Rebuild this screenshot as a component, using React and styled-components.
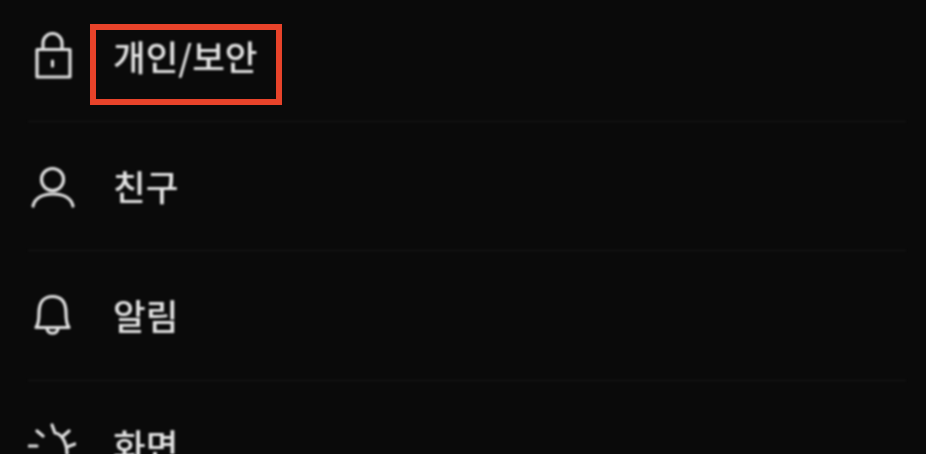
import React from "react";
import styled, { createGlobalStyle } from "styled-components";

const Global = createGlobalStyle`
  html, body { margin: 0; padding: 0; background: #0a0a0a; }
  body { width: 926px; height: 454px; overflow: hidden; }
`;

const Screen = styled.div`
  width: 926px;
  height: 454px;
  overflow: hidden;
  position: relative;
  background: #0a0a0a;
  font-family: "Noto Sans CJK KR", "Noto Sans", sans-serif;
`;

const List = styled.ul`
  list-style: none;
  margin: -8px 0 0;
  padding: 0 20px 0 28px;
  filter: blur(1px);
`;

const Row = styled.li`
  height: 129.5px;
  box-sizing: border-box;
  display: flex;
  align-items: center;
  border-bottom: 1px solid #1a1a1a;
`;

const IconSlot = styled.span`
  width: 48px;
  height: 48px;
  flex: none;
  display: block;
  color: #e2e2e2;
  svg { display: block; }
`;

const Label = styled.span`
  margin-left: 37px;
  font-size: 35.5px;
  font-weight: 500;
  line-height: 48px;
  color: #e4e4e4;
`;

const Highlight = styled.div`
  position: absolute;
  left: 90px;
  top: 24px;
  width: 192px;
  height: 81px;
  box-sizing: border-box;
  border: 6px solid #e8432a;
`;

const Icon = ({ children }) => (
  <IconSlot>
    <svg width="48" height="48" viewBox="0 0 48 48" fill="none" stroke="currentColor" strokeWidth="3.2" strokeLinecap="round" strokeLinejoin="round">
      {children}
    </svg>
  </IconSlot>
);

const items = [
  {
    label: "개인/보안",
    icon: (
      <>
        <rect x="9" y="17.500" width="33" height="27.500" />
        <path d="M15 17v-6a9.500 9.500 0 0 1 19 0v6" />
        <path d="M24.500 29v5" />
      </>
    ),
  },
  {
    label: "친구",
    icon: (
      <>
        <circle cx="24.500" cy="17.500" r="11" />
        <path d="M5 44C7 36 15 32 25 32S43 36 45 44" />
      </>
    ),
  },
  {
    label: "알림",
    icon: (
      <>
        <path d="M8 36.500C10 34 11 30 11 22C11 11 16 5.500 24.500 5.500S38 11 38 22C38 30 39 34 41 36.500Z" />
        <path d="M19 37C19 44 30 44 30 37" />
      </>
    ),
  },
  {
    label: "화면",
    icon: (
      <>
        <path d="M24 4L27 12C34 13 39 22 39 33" />
        <path d="M9 10L15 15M1 25H9M41 10L34 16M39 26L47 23" />
      </>
    ),
  },
];

export default function App() {
  return (
    <Screen>
      <Global />
      <List>
        {items.map((it) => (
          <Row key={it.label}>
            <Icon>{it.icon}</Icon>
            <Label>{it.label}</Label>
          </Row>
        ))}
      </List>
      <Highlight />
    </Screen>
  );
}
